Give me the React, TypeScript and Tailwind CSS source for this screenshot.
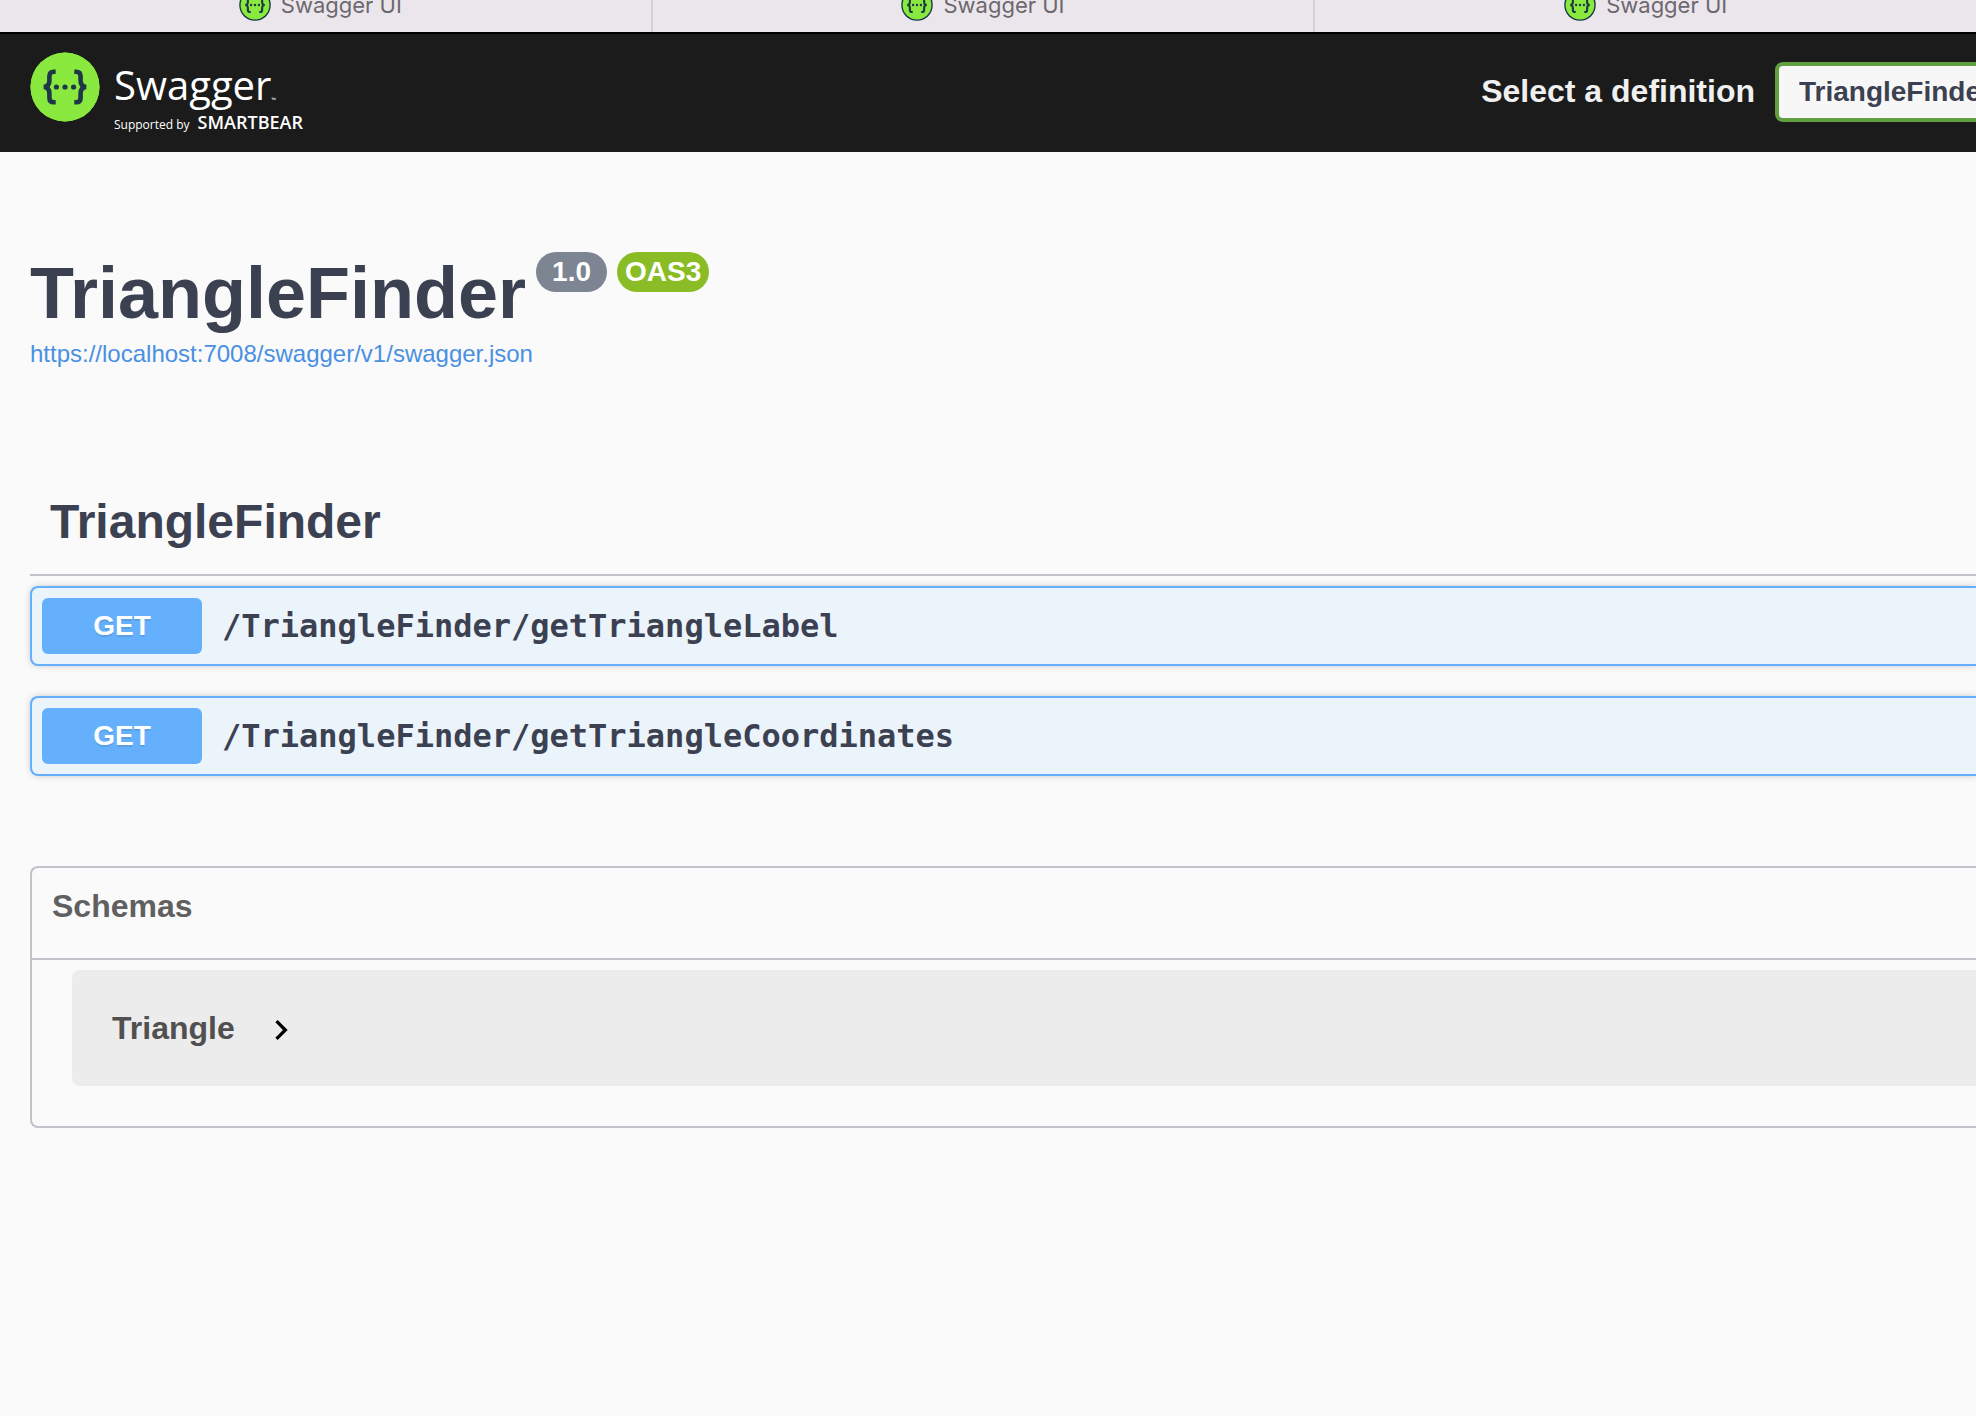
import React from "react";

const tabs = ["Swagger UI", "Swagger UI", "Swagger UI"];

const operations = [
  { method: "GET", path: "/TriangleFinder/getTriangleLabel" },
  { method: "GET", path: "/TriangleFinder/getTriangleCoordinates" },
];

function SwaggerMark({ className, ringed = false }: { className: string; ringed?: boolean }) {
  return (
    <svg viewBox="0 0 70 70" className={className} aria-hidden="true">
      <circle cx="35" cy="35" r="34.5" fill={ringed ? "#173647" : "#89e93f"} />
      <circle cx="35" cy="35" r={ringed ? 31.5 : 34.5} fill="#89e93f" />
      <g fill="none" stroke="#1e3847" strokeWidth="4.6">
        <path d="M25.700 19.700h-1.900c-3 0-4.400 1.600-4.400 4.600v4.500c0 3.400-1.400 5.800-5.600 6.200 4.200.4 5.600 2.800 5.600 6.200v4.500c0 3 1.400 4.600 4.400 4.600h1.900" />
        <path d="M44.300 19.700h1.900c3 0 4.400 1.600 4.400 4.600v4.500c0 3.400 1.400 5.800 5.600 6.200-4.200.4-5.600 2.800-5.600 6.200v4.500c0 3-1.400 4.600-4.400 4.600h-1.900" />
      </g>
      <g fill="#1e3847">
        <circle cx="26.400" cy="35" r="2.600" />
        <circle cx="35" cy="35" r="2.600" />
        <circle cx="43.600" cy="35" r="2.600" />
      </g>
    </svg>
  );
}

function BrowserTabs() {
  return (
    <nav className="-ml-2.5 flex h-8 items-end overflow-hidden bg-[#ebe6ec]" aria-label="Browser tabs">
      {tabs.map((title, i) => (
        <button
          key={i}
          type="button"
          className="flex h-[54px] shrink-0 flex-1 items-center justify-center gap-2.5 border-r-2 border-[#d5d0d6] text-[22px] leading-8 text-[#6c686e] last:border-r-0 font-['Inter',sans-serif]"
        >
          <SwaggerMark className="size-8" ringed />
          {title}
        </button>
      ))}
    </nav>
  );
}

function Topbar() {
  return (
    <header className="flex h-[120px] items-center justify-between overflow-hidden border-t-2 border-black bg-[#1b1b1b] pl-[30px]">
      <a href="#" className="flex items-start gap-3.5 text-white font-['Open_Sans',sans-serif]" aria-label="Swagger, supported by SmartBear">
        <SwaggerMark className="size-[70px]" />
        <span className="flex flex-col pt-1.5">
          <span className="flex items-end text-[40px] leading-[54px]">
            Swagger<span className="text-[6px] leading-6">™</span>
          </span>
          <span className="flex items-baseline gap-2 text-[12px] leading-5">
            Supported by <span className="text-[18px] font-semibold">SMARTBEAR</span>
          </span>
        </span>
      </a>
      <div className="-mr-50 flex shrink-0 items-center gap-5 pb-0.5">
        <label htmlFor="definition" className="pb-0.5 text-[32px] leading-10 font-bold text-[#f0f0f0]">
          Select a definition
        </label>
        <select
          id="definition"
          className="h-[60px] w-[401px] appearance-none rounded-lg border-4 border-[#62a03f] bg-[#f7f7f7] px-5 text-[28px] font-bold text-[#3b4151]"
        >
          <option>TriangleFinder v1</option>
        </select>
      </div>
    </header>
  );
}

function Operation({ method, path }: { method: string; path: string }) {
  return (
    <button
      type="button"
      className="flex w-full items-center gap-5 rounded-l-lg border-2 border-r-0 border-[#65b0fc] bg-[#ebf3fb] p-2.5 text-left text-[#3b4151] shadow-[0_0_6px_rgba(0,0,0,0.19)]"
    >
      <span className="w-40 rounded-md bg-[#65b0fc] text-center text-[28px] leading-14 font-bold text-white [text-shadow:0_2px_0_rgba(0,0,0,0.1)]">
        {method}
      </span>
      <span className="text-[32px] leading-10 font-bold font-['DejaVu_Sans_Mono',monospace]">{path}</span>
    </button>
  );
}

export default function App() {
  return (
    <div className="min-h-screen overflow-hidden bg-[#fafafa] font-['Liberation_Sans',Arial,sans-serif]">
      <BrowserTabs />
      <Topbar />
      <main className="pl-[30px]">
        <section className="pt-25">
          <div className="flex items-start gap-2.5 text-[28px] leading-10 font-bold text-white">
            <h1 className="text-[72px] leading-[82px] text-[#3b4151]">TriangleFinder</h1>
            <span className="rounded-full bg-[#7d8492] px-4">1.0</span>
            <span className="rounded-full bg-[#8abd25] px-2">OAS3</span>
          </div>
          <a href="https://localhost:7008/swagger/v1/swagger.json" className="mt-1 block w-fit text-[24px] leading-8 text-[#4990e2]">
            https://localhost:7008/swagger/v1/swagger.json
          </a>
        </section>

        <section className="pt-31">
          <h2 className="border-b-2 border-[#c2c2c8] pb-6 pl-5 text-[48px] leading-14 font-bold text-[#3b4151]">
            TriangleFinder
          </h2>
          <div className="flex flex-col gap-[30px] pt-2.5">
            {operations.map((op) => (
              <Operation key={op.path} method={op.method} path={op.path} />
            ))}
          </div>
        </section>

        <section className="mt-[90px] rounded-l-lg border-2 border-r-0 border-[#c2c2c8] pb-10">
          <h2 className="border-b-2 border-[#c2c2c8] text-[32px] leading-10 font-bold text-[#606060]">
            <button type="button" className="w-full px-5 pt-[18px] pb-8 text-left">
              Schemas
            </button>
          </h2>
          <div className="mt-2.5 ml-10 rounded-l-lg bg-[#ececec] px-10">
            <button type="button" className="flex h-[116px] items-center gap-[26px] text-[32px] leading-10 font-bold text-[#505050]">
              Triangle
              <svg viewBox="0 0 24 24" className="mt-1 size-10" fill="#000" aria-hidden="true">
                <path d="M10 6L8.590 7.410 13.170 12l-4.580 4.590L10 18l6-6z" />
              </svg>
            </button>
          </div>
        </section>
      </main>
    </div>
  );
}
